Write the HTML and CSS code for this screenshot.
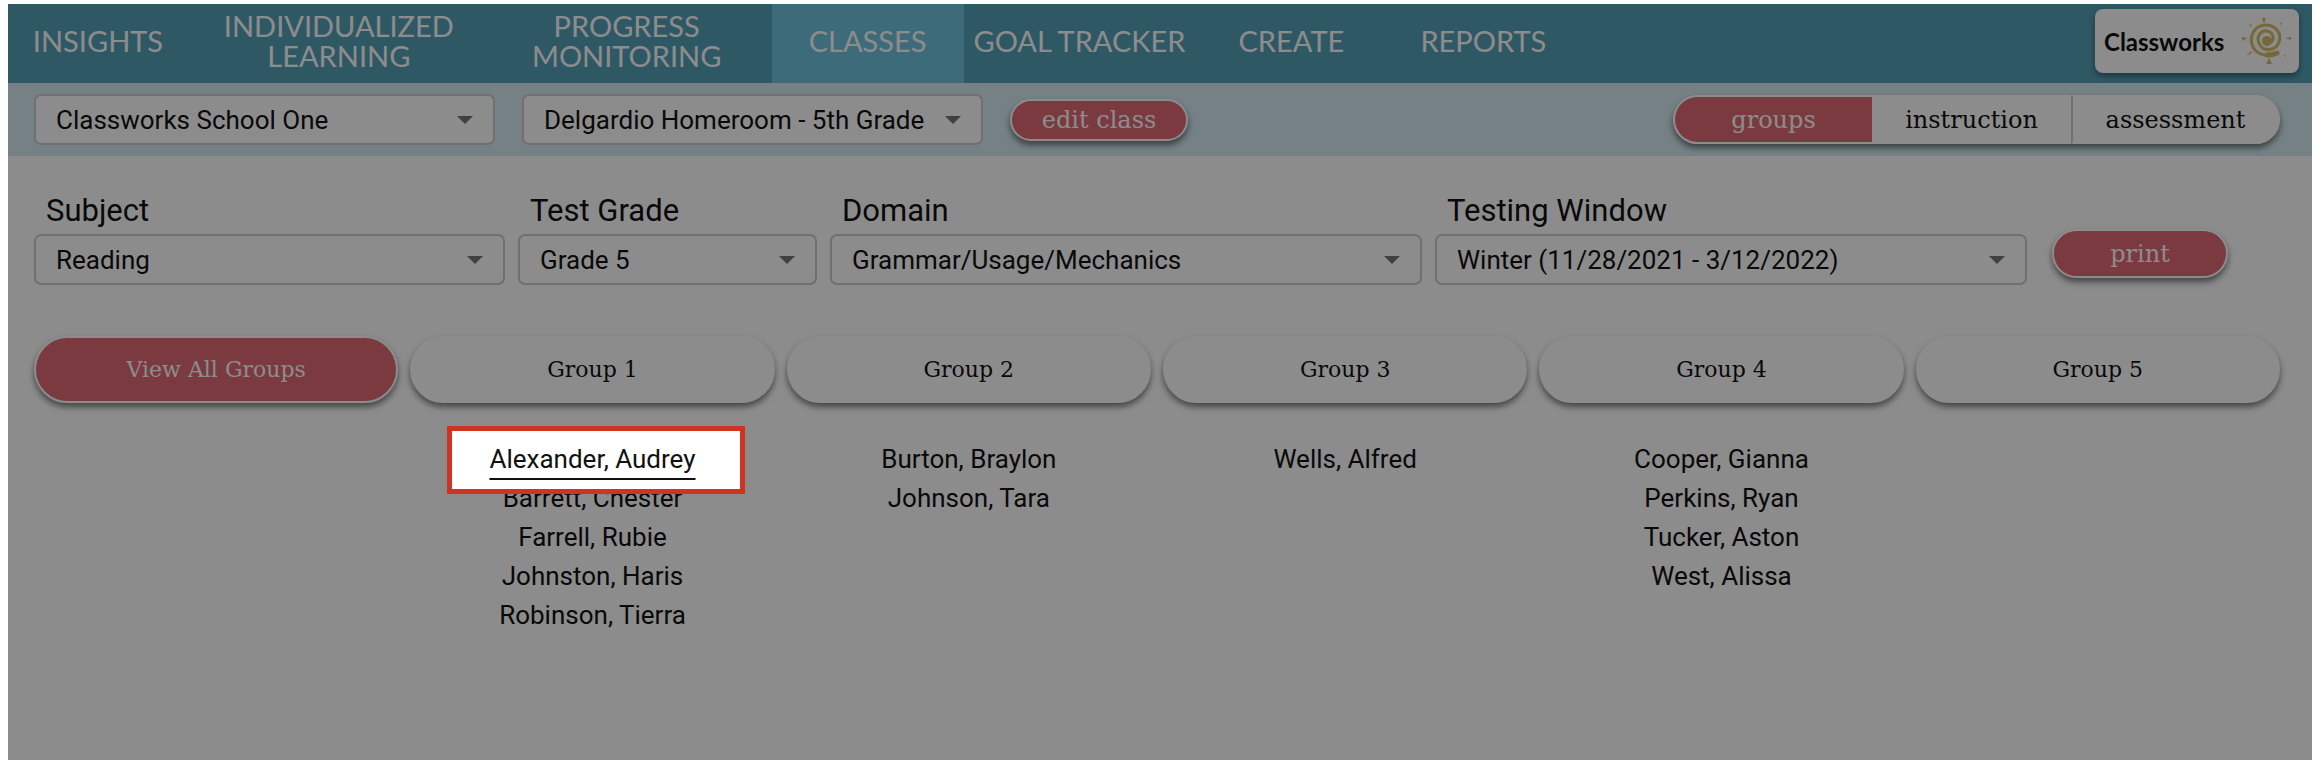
FILE: index.html
```html
<!DOCTYPE html>
<html lang="en">

<head>
    <meta charset="UTF-8">
    <meta name="viewport" content="width=device-width, initial-scale=1.0">
    <title>Classworks - Class Groups</title>
    <link rel="stylesheet" href="styles.css">
</head>

<body>
    <div class="page">
        <header class="topbar">
            <nav class="tabs">
                <a href="#" class="first">INSIGHTS</a>
                <a href="#">INDIVIDUALIZED<br>LEARNING</a>
                <a href="#">PROGRESS<br>MONITORING</a>
                <a href="#" class="active">CLASSES</a>
                <a href="#">GOAL TRACKER</a>
                <a href="#">CREATE</a>
                <a href="#">REPORTS</a>
            </nav>
            <a href="#" class="logo">
                <span>Classworks</span>
                <svg class="sun" viewBox="0 0 72 72" aria-hidden="true">
                    <path d="M50 48 C42 53 30 50 26 42 C21 31 28 20 39 20 C49 20 55 29 52 37 C49 46 37 47 33 40 C28 32 34 25 40 26 C46 27 48 34 44 37" />
                    <path class="tail" d="M50 48 C46 50 43 50 40 50" />
                    <path class="fill" d="M35 13h4l-2 6zM15 32l6 1-6 3zM64 32l-6 1 6 2zM39 59l3-6 3 6zM19 51l5-5 1 2zM22 19l3 1-1 2zM52 19l3-2-1 3zM56 49l3 2-1 1z" />
                    <circle class="fill" cx="40" cy="36" r="5" />
                </svg>
            </a>
        </header>

        <div class="classbar">
            <div class="select school">
                <select aria-label="School">
                    <option>Classworks School One</option>
                </select>
            </div>
            <div class="select homeroom">
                <select aria-label="Class">
                    <option>Delgardio Homeroom - 5th Grade</option>
                </select>
            </div>
            <button type="button" class="btn pink edit">edit class</button>
            <div class="switch">
                <button type="button" class="pink">groups</button>
                <button type="button">instruction</button>
                <button type="button">assessment</button>
            </div>
        </div>

        <main>
            <form class="filters">
                <div class="field">
                    <label for="subject">Subject</label>
                    <div class="select">
                        <select id="subject">
                            <option>Reading</option>
                        </select>
                    </div>
                </div>
                <div class="field">
                    <label for="grade">Test Grade</label>
                    <div class="select">
                        <select id="grade">
                            <option>Grade 5</option>
                        </select>
                    </div>
                </div>
                <div class="field">
                    <label for="domain">Domain</label>
                    <div class="select">
                        <select id="domain">
                            <option>Grammar/Usage/Mechanics</option>
                        </select>
                    </div>
                </div>
                <div class="field">
                    <label for="window">Testing Window</label>
                    <div class="select">
                        <select id="window">
                            <option>Winter (11/28/2021 - 3/12/2022)</option>
                        </select>
                    </div>
                </div>
                <button type="button" class="btn pink print">print</button>
            </form>

            <div class="groups">
                <div class="group">
                    <button type="button" class="btn pink">View All Groups</button>
                </div>
                <div class="group">
                    <button type="button" class="btn">Group 1</button>
                    <ul>
                        <li><a href="#" class="spotlight">Alexander, Audrey</a></li>
                        <li>Barrett, Chester</li>
                        <li>Farrell, Rubie</li>
                        <li>Johnston, Haris</li>
                        <li>Robinson, Tierra</li>
                    </ul>
                </div>
                <div class="group">
                    <button type="button" class="btn">Group 2</button>
                    <ul>
                        <li>Burton, Braylon</li>
                        <li>Johnson, Tara</li>
                    </ul>
                </div>
                <div class="group">
                    <button type="button" class="btn">Group 3</button>
                    <ul>
                        <li>Wells, Alfred</li>
                    </ul>
                </div>
                <div class="group">
                    <button type="button" class="btn">Group 4</button>
                    <ul>
                        <li>Cooper, Gianna</li>
                        <li>Perkins, Ryan</li>
                        <li>Tucker, Aston</li>
                        <li>West, Alissa</li>
                    </ul>
                </div>
                <div class="group">
                    <button type="button" class="btn">Group 5</button>
                </div>
            </div>
        </main>
    </div>
</body>

</html>
```

FILE: styles.css
```css
* {
    box-sizing: border-box;
}

body {
    margin: 4px 8px;
    background: #fff;
    color: #111;
    font-family: Roboto, sans-serif;
    font-size: 26px;
}

/* overflow keeps the spotlight's shade inside the page */
.page {
    min-height: calc(100vh - 8px);
    overflow: hidden;
    background: #fff;
}

/* top navigation */
.topbar {
    display: flex;
    justify-content: space-between;
    min-height: 79px;
    background: #57a0b9;
}

.tabs {
    flex: 1;
    display: grid;
    grid-template-columns: 94fr 143fr 145fr 96fr 116fr 96fr 96fr 258fr;
}

.tabs a {
    display: flex;
    align-items: center;
    justify-content: center;
    padding-bottom: 6px;
    color: #fff;
    font-family: Lato, sans-serif;
    font-size: 29px;
    line-height: 30px;
    text-align: center;
    text-decoration: none;
    white-space: nowrap;
}

.tabs .first {
    padding-right: 8px;
}

.tabs .active {
    background: #6fc3de;
}

.logo {
    display: flex;
    align-items: center;
    justify-content: space-between;
    width: 204px;
    height: 64px;
    margin: 5px 13px 0 0;
    padding-left: 9px;
    border-radius: 8px;
    background: #fff;
    box-shadow: 0 3px 6px rgba(0, 0, 0, 0.4);
    color: #111;
    font-family: Lato, sans-serif;
    font-size: 24px;
    font-weight: bold;
    text-decoration: none;
}

.sun {
    width: 72px;
    height: 72px;
    fill: none;
    stroke: #d9bd6a;
    stroke-width: 3;
    stroke-linecap: round;
}

.sun .tail {
    stroke-width: 5;
}

.sun .fill {
    fill: #d9bd6a;
    stroke: none;
}

/* school and class pickers */
.classbar {
    display: flex;
    align-items: center;
    min-height: 73px;
    padding: 0 32px 0 26px;
    background: #d5ebf2;
}

.school,
.homeroom {
    flex: 0 0 461px;
    margin-right: 27px;
}

.select {
    position: relative;
}

.select select {
    display: block;
    width: 100%;
    height: 51px;
    padding: 0 44px 0 20px;
    border: 2px solid #ccc;
    border-radius: 7px;
    appearance: none;
    background: #fff;
    color: #111;
    font-family: inherit;
    font-size: 26px;
}

.select::after {
    content: "";
    position: absolute;
    top: 22px;
    right: 22px;
    border: 8px solid transparent;
    border-top-color: #757575;
    border-bottom: 0;
    pointer-events: none;
}

/* buttons */
.btn,
.switch button {
    border: 2px solid #fff;
    background: #fff;
    color: #111;
    font-family: "DejaVu Serif", serif;
    font-size: 24px;
    cursor: pointer;
}

.btn {
    border-radius: 34px;
    box-shadow: 0 4px 6px rgba(0, 0, 0, 0.5);
}

.btn.pink,
.switch .pink {
    background: #e16976;
    color: #fff;
}

.edit {
    width: 178px;
    height: 42px;
    padding: 0;
}

.switch {
    display: grid;
    grid-template-columns: 20fr 20fr 21fr;
    width: 607px;
    margin-left: auto;
    border-radius: 25px;
    box-shadow: 0 4px 6px rgba(0, 0, 0, 0.5);
}

.switch button {
    height: 49px;
    padding: 0;
}

.switch button:first-child {
    border-right: 0;
    border-radius: 25px 0 0 25px;
}

.switch button:last-child {
    border-left: 2px solid #ccc;
    border-radius: 0 25px 25px 0;
}

main {
    padding: 32px 32px 32px 26px;
}

/* filters */
.filters {
    display: grid;
    grid-template-columns: 471fr 299fr 592fr 592fr 240fr;
    gap: 13px;
    align-items: end;
}

.field label {
    display: block;
    padding-left: 12px;
    font-size: 31px;
    line-height: 46px;
}

.print {
    width: 176px;
    height: 49px;
    margin: 0 0 7px 12px;
}

/* groups */
.groups {
    display: grid;
    grid-template-columns: repeat(6, 1fr);
    gap: 12px;
    margin-top: 51px;
}

.group .btn {
    width: 100%;
    height: 67px;
    font-size: 22px;
}

.group ul {
    margin: 37px 0 0;
    padding: 0;
    list-style: none;
    text-align: center;
    line-height: 39px;
}

/* highlighted student, the rest of the page is shaded */
.spotlight {
    position: relative;
    z-index: 1;
    display: block;
    width: fit-content;
    margin: 0 auto;
    color: #111;
    text-decoration: underline 2px;
    text-decoration-skip-ink: none;
    text-underline-offset: 10px;
}

.spotlight::before {
    content: "";
    position: absolute;
    z-index: -1;
    inset: -14px -49px -15px -42px;
    border: 5px solid #cf3423;
    background: #fff;
    box-shadow: 0 0 0 9999px rgba(0, 0, 0, 0.45);
}
```
